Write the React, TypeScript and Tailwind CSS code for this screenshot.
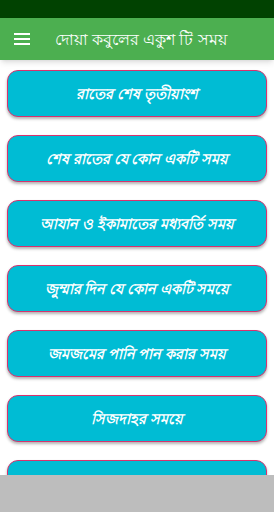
const items = [
  "রাতের শেষ তৃতীয়াংশ",
  "শেষ রাতের যে কোন একটি সময়",
  "আযান ও ইকামাতের মধ্যবর্তি সময়",
  "জুম্মার দিন যে কোন একটি সময়ে",
  "জমজমের পানি পান করার সময়",
  "সিজদাহর সময়ে",
  "",
];

export default function App() {
  return (
    <div className="relative h-[512px] w-[274px] overflow-hidden bg-white font-['Noto_Sans','Liberation_Sans',sans-serif]">
      <div className="h-[18px] bg-[#014201]" />
      <div className="flex h-[42px] items-center bg-[#4caf50] shadow-md">
        <svg className="ml-[14px] h-[14px] w-[16px]" viewBox="0 0 16 14">
          <rect x="0" y="1" width="16" height="2" fill="white" />
          <rect x="0" y="6" width="16" height="2" fill="white" />
          <rect x="0" y="11" width="16" height="2" fill="white" />
        </svg>
        <span className="ml-[25px] text-[16px] text-white">দোয়া কবুলের একুশ টি সময়</span>
      </div>
      <div className="flex flex-col gap-[18px] px-[7px] pt-[10px]">
        {items.map((t, i) => (
          <div
            key={i}
            className="flex h-[47px] shrink-0 items-center justify-center rounded-[11px] border border-[#d8326e] bg-[#00bcd4] shadow-[0_2px_3px_rgba(0,0,0,0.3)]"
          >
            <span className="text-[14.5px] font-bold italic text-white">{t}</span>
          </div>
        ))}
      </div>
      <div className="absolute bottom-0 left-0 h-[37px] w-full bg-[#bdbdbd]" />
    </div>
  );
}
